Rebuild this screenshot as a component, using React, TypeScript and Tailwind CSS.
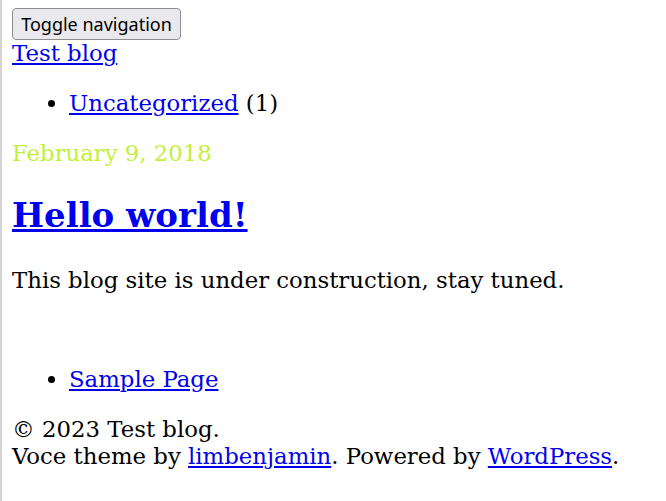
export default function App() {
  return (
    <div className="min-h-[501px] border-l-2 border-[#d4d4d4] bg-white pl-[10px] pt-[8px] font-['DejaVu_Serif',serif] text-[22.8px] leading-[1.164] text-black">
      <header>
        <button
          type="button"
          className="h-[32px] w-[169px] rounded-[4px] border border-[#8f8f8f] bg-[#e9e9ed] font-['Noto_Sans',sans-serif] text-[18px] leading-none text-black"
        >
          Toggle navigation
        </button>
        <div>
          <a href="#" className="text-[#0000ee] underline">Test blog</a>
        </div>
        <ul className="mt-[23px] mb-[24px] list-disc pl-[57px]">
          <li>
            <a href="#" className="text-[#0000ee] underline">Uncategorized</a> (1)
          </li>
        </ul>
      </header>

      <main>
        <div className="text-[#c2f03a]">February 9, 2018</div>
        <h2 className="mt-[29px] mb-[32px] text-[34px] font-bold">
          <a href="#" className="text-[#0000ee] underline">Hello world!</a>
        </h2>
        <p>This blog site is under construction, stay tuned.</p>
      </main>

      <footer className="mt-[72px]">
        <ul className="mb-[24px] list-disc pl-[57px]">
          <li>
            <a href="#" className="text-[#0000ee] underline">Sample Page</a>
          </li>
        </ul>
        <div>© 2023 Test blog.</div>
        <div>
          Voce theme by <a href="#" className="text-[#0000ee] underline">limbenjamin</a>. Powered by{' '}
          <a href="#" className="text-[#0000ee] underline">WordPress</a>.
        </div>
      </footer>
    </div>
  );
}
